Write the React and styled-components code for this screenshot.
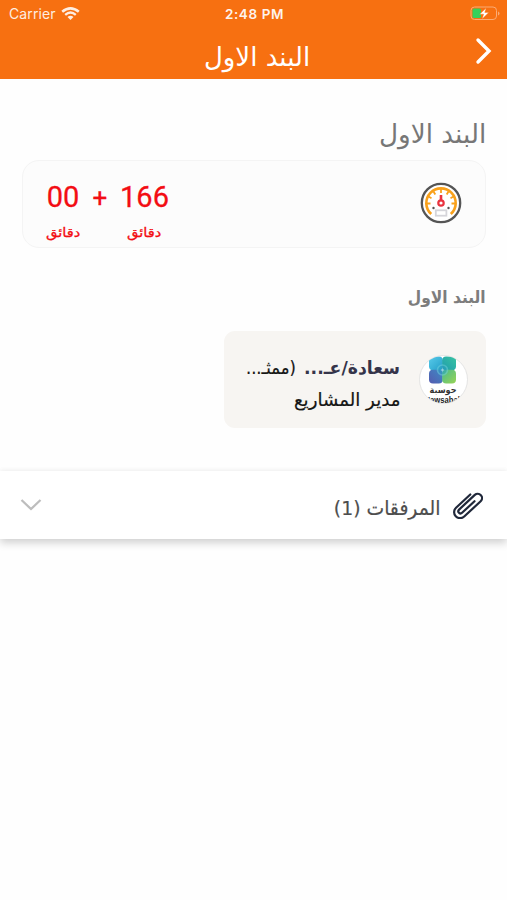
import React from "react";
import styled, { createGlobalStyle } from "styled-components";

const GlobalStyle = createGlobalStyle`
  * {
    box-sizing: border-box;
  }
  body {
    margin: 0;
    background: #fefefe;
    font-family: Roboto, "DejaVu Sans", sans-serif;
  }
`;

const Screen = styled.div`
  width: 100%;
  height: 900px;
  overflow: hidden;
`;

const Header = styled.header`
  height: 79px;
  background: #f77011;
  color: #fff;
`;

const StatusBar = styled.div`
  display: grid;
  grid-template-columns: 1fr auto 1fr;
  align-items: center;
  height: 27px;
  padding: 0 7px 0 9px;
  font-family: Inter, sans-serif;
`;

const Carrier = styled.div`
  display: flex;
  align-items: center;
  gap: 5px;
  font-size: 14px;
  letter-spacing: 0.1px;
  opacity: 0.88;
`;

const Clock = styled.div`
  font-size: 13.5px;
  font-weight: 600;
  letter-spacing: 0.6px;
  opacity: 0.92;
`;

const BatteryBox = styled.div`
  display: flex;
  justify-content: flex-end;
`;

const NavBar = styled.div`
  display: grid;
  grid-template-columns: 40px 1fr 40px;
  align-items: center;
  height: 52px;
`;

/* one line of Arabic text, narrowed or widened from its own origin */
const Label = styled.div`
  width: max-content;
  direction: rtl;
  white-space: nowrap;
  font-family: "DejaVu Sans", sans-serif;
  font-size: ${(p) => p.$size}px;
  font-weight: ${(p) => p.$weight || 400};
  line-height: ${(p) => p.$line}px;
  color: ${(p) => p.$color};
  -webkit-text-stroke: ${(p) => p.$stroke || 0}px ${(p) => p.$color};
  transform: scaleX(${(p) => p.$stretch || 1});
  transform-origin: ${(p) => p.$origin || "right"} center;
`;

const TitleSlot = styled.div`
  display: flex;
  justify-content: center;
  padding: 8px 0 0 7px;
`;

const BackButton = styled.button`
  display: flex;
  padding: 0;
  margin: -4px 0 0 8px;
  border: 0;
  background: none;
`;

const Content = styled.main`
  display: flex;
  flex-direction: column;
  align-items: flex-end;
  height: 392px;
  padding: 37px 21px 0 22px;
`;

const TimerCard = styled.section`
  display: flex;
  justify-content: space-between;
  width: 100%;
  height: 88px;
  margin: 8px 0 35px;
  padding: 19px 23px 0;
  border: 1px solid #f4f4f4;
  border-radius: 17px;
  background: #fcfcfc;
`;

const Counters = styled.div`
  display: flex;
  color: #f30d13;
`;

const Counter = styled.div`
  display: flex;
  flex-direction: column;
  align-items: center;
  width: ${(p) => p.$width}px;
`;

const Digits = styled.div`
  height: 39px;
  font-size: 29px;
  line-height: 35px;
  -webkit-text-stroke: 0.3px #f30d13;
`;

const Plus = styled(Digits)`
  width: 40px;
  font-size: 26px;
  line-height: 37px;
  text-align: center;
`;

const GaugeBox = styled.div`
  padding-top: 2px;
`;

const PersonCard = styled.section`
  display: flex;
  flex-direction: row-reverse;
  align-items: flex-start;
  gap: 19px;
  width: 262px;
  height: 97px;
  margin-top: 20px;
  padding: 24px 18px 0;
  border-radius: 11px;
  background: #f7f5f2;
`;

const PersonText = styled.div`
  display: flex;
  flex-direction: column;
  align-items: flex-end;
  width: 155px;
`;

const NameRow = styled.div`
  display: flex;
  flex-direction: row-reverse;
  justify-content: space-between;
  width: 155px;
  height: 28px;
`;

const NameSlot = styled.div`
  display: flex;
  justify-content: flex-end;
  width: ${(p) => p.$width}px;
`;

const Attachments = styled.section`
  display: flex;
  flex-direction: row-reverse;
  align-items: center;
  height: 68px;
  padding: 0 24px 0 20px;
  background: #fff;
  box-shadow: 0 4px 8px rgba(0, 0, 0, 0.18), 0 -2px 4px rgba(0, 0, 0, 0.025);
`;

const AttachmentLabel = styled.div`
  flex: 1;
  display: flex;
  justify-content: flex-end;
  padding: 6px 12px 0 0;
`;

function Wifi() {
  return (
    <svg width="19" height="14" viewBox="0 0 19 14" fill="none">
      <path d="M1.2 4.8Q9.5-2 17.8 4.8" stroke="#fff" strokeWidth="2.6" />
      <path d="M4.2 7.8Q9.5 3.3 14.8 7.8" stroke="#fff" strokeWidth="2.4" />
      <path d="M6.5 10Q9.5 7.5 12.5 10L9.5 13Z" fill="#fff" />
    </svg>
  );
}

function Battery() {
  return (
    <svg width="30" height="15" viewBox="0 0 30 15">
      <rect x="1" y="1" width="25.5" height="12.5" rx="3.5" fill="none" stroke="#fbab75" />
      <path d="M28 5.5v4q1.5-.7 1.5-2t-1.5-2" fill="#fbab75" />
      <rect x="2.5" y="2.5" width="8.5" height="9.5" rx="1.5" fill="#35d05b" />
      <path d="M16.2 2 9.6 8.2h4L12.1 13l6.700-6.600h-4z" fill="#fff" stroke="#f77011" strokeWidth=".4" />
    </svg>
  );
}

function Gauge() {
  return (
    <svg width="42" height="42" viewBox="0 0 42 42" fill="none">
      <circle cx="21" cy="21" r="19.2" fill="#fff" stroke="#555" strokeWidth="2.3" />
      <path d="M11.2 32A14.7 14.7 0 1 1 30.8 32" stroke="#f9a11b" strokeWidth="2.6" />
      <path
        d="M21 7v4M13.5 9.5l1.8 3M28.5 9.5l-1.8 3M8.5 14.5l3 1.7M33.5 14.5l-3 1.7M7 21.5h3.5M35 21.5h-3.5"
        stroke="#f9a11b"
        strokeWidth="1.8"
      />
      <path d="M21 13v6" stroke="#e9333f" strokeWidth="2.6" />
      <circle cx="21" cy="21" r="2.7" fill="#fff" stroke="#e9333f" strokeWidth="2.2" />
      <circle cx="13.5" cy="26" r="1.2" fill="#555" />
      <circle cx="28.5" cy="26" r="1.2" fill="#555" />
      <rect x="15.8" y="28.3" width="10.6" height="5.4" fill="#fff" stroke="#d5d5da" strokeWidth="1.8" />
    </svg>
  );
}

function Avatar() {
  return (
    <svg width="49" height="49" viewBox="0 0 49 49">
      <defs>
        <clipPath id="avatar">
          <circle cx="24.5" cy="24.5" r="23.7" />
        </clipPath>
        <linearGradient id="sky" x1="0" y1="0" x2="1" y2="1">
          <stop offset="0" stopColor="#58cbea" />
          <stop offset="1" stopColor="#239ec8" />
        </linearGradient>
        <linearGradient id="teal" x1="1" y1="0" x2="0" y2="1">
          <stop offset="0" stopColor="#38c4a1" />
          <stop offset="1" stopColor="#219bae" />
        </linearGradient>
        <linearGradient id="indigo" x1="1" y1="0" x2="0" y2="1">
          <stop offset="0" stopColor="#3e8ac5" />
          <stop offset="1" stopColor="#555bb0" />
        </linearGradient>
        <linearGradient id="lime" x1="0" y1="0" x2="1" y2="1">
          <stop offset="0" stopColor="#4abb8c" />
          <stop offset="1" stopColor="#98d455" />
        </linearGradient>
      </defs>
      <circle cx="24.5" cy="24.5" r="24" fill="#fff" stroke="#dedede" strokeWidth=".8" />
      <g clipPath="url(#avatar)">
        <rect x="10" y="1.5" width="13.8" height="13.8" rx="4" fill="url(#sky)" />
        <rect x="23.2" y="1.5" width="13.8" height="13.8" rx="4" fill="url(#teal)" />
        <rect x="10" y="14.7" width="13.8" height="13.8" rx="4" fill="url(#indigo)" />
        <rect x="23.2" y="14.7" width="13.8" height="13.8" rx="4" fill="url(#lime)" />
        <circle cx="23.5" cy="15" r="5" fill="#2c9fc0" stroke="#6fd0dc" strokeWidth="1.6" opacity=".5" />
        <text
          x="24"
          y="38"
          textAnchor="middle"
          fontFamily="DejaVu Sans"
          fontWeight="700"
          fontSize="9"
          textLength="27"
          lengthAdjust="spacingAndGlyphs"
          fill="#333"
        >
          حوسبة
        </text>
        <text
          x="24.5"
          y="48"
          textAnchor="middle"
          fontFamily="Liberation Sans"
          fontWeight="700"
          fontSize="8.5"
          textLength="38"
          lengthAdjust="spacingAndGlyphs"
          fill="#222"
        >
          Hawsabah
        </text>
      </g>
    </svg>
  );
}

function Clip() {
  return (
    <svg width="30" height="28" viewBox="0 0 30 28" fill="none" stroke="#20283a" strokeWidth="2.2" strokeLinecap="round">
      <path
        transform="translate(14.8 14) rotate(47)"
        d="M-6-9V10.500A6 6 0 0 0 6 10.500V-12A4.300 4.300 0 0 0-2.600-12V9.500A2.200 2.200 0 0 0 1.800 9.500V-7.500"
      />
    </svg>
  );
}

function App() {
  return (
    <>
      <GlobalStyle />
      <Screen>
        <Header>
          <StatusBar>
            <Carrier>
              Carrier
              <Wifi />
            </Carrier>
            <Clock>2:48 PM</Clock>
            <BatteryBox>
              <Battery />
            </BatteryBox>
          </StatusBar>
          <NavBar>
            <span />
            <TitleSlot>
              <Label $size={26} $line={44} $color="#fff" $origin="center">
                البند الاول
              </Label>
            </TitleSlot>
            <BackButton aria-label="رجوع">
              <svg width="18" height="28" viewBox="0 0 18 28" fill="none">
                <path d="m3 3 11 11L3 25" stroke="#fff" strokeWidth="3.4" strokeLinecap="round" />
              </svg>
            </BackButton>
          </NavBar>
        </Header>
        <Content>
          <Label $size={26} $line={36} $color="#777" $stretch={1.01}>
            البند الاول
          </Label>
          <TimerCard>
            <Counters>
              <Counter $width={34}>
                <Digits>00</Digits>
                <Label $size={13} $line={28} $color="#f30d13" $stroke={0.3} $stretch={1.13} $origin="center">
                  دقائق
                </Label>
              </Counter>
              <Plus>+</Plus>
              <Counter $width={49}>
                <Digits>166</Digits>
                <Label $size={13} $line={28} $color="#f30d13" $stroke={0.3} $stretch={1.13} $origin="center">
                  دقائق
                </Label>
              </Counter>
            </Counters>
            <GaugeBox>
              <Gauge />
            </GaugeBox>
          </TimerCard>
          <Label $size={17} $line={28} $weight={700} $color="#7d7d7d" $stretch={0.91}>
            البند الاول
          </Label>
          <PersonCard>
            <Avatar />
            <PersonText>
              <NameRow>
                <NameSlot $width={96}>
                  <Label $size={18} $line={26} $weight={700} $color="#35344a" $stretch={0.96}>
                    سعادة/عـ...
                  </Label>
                </NameSlot>
                <NameSlot $width={51}>
                  <Label $size={18} $line={26} $color="#151515" $stroke={0.2} $stretch={0.91}>
                    (ممثـ...
                  </Label>
                </NameSlot>
              </NameRow>
              <Label $size={18} $line={34} $color="#151515" $stroke={0.2} $stretch={1.01}>
                مدير المشاريع
              </Label>
            </PersonText>
          </PersonCard>
        </Content>
        <Attachments>
          <Clip />
          <AttachmentLabel>
            <Label $size={20} $line={30} $color="#4d4d4d" $stroke={0.2} $stretch={0.94}>
              المرفقات (1)
            </Label>
          </AttachmentLabel>
          <svg width="22" height="14" viewBox="0 0 22 14" fill="none">
            <path d="m1.5 2 9.5 9L20.5 2" stroke="#bdbdbd" strokeWidth="2.3" />
          </svg>
        </Attachments>
      </Screen>
    </>
  );
}

export default App;
